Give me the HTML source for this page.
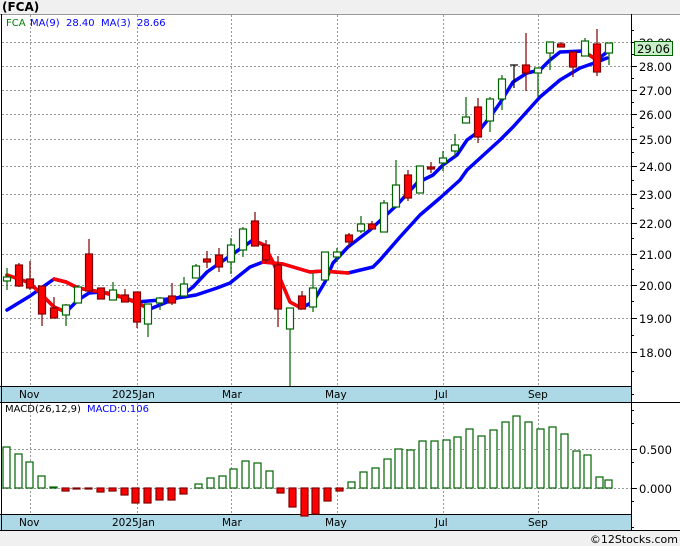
<!DOCTYPE html>
<html><head><meta charset="utf-8"><style>
body{margin:0;background:#f0f0f0;width:680px;height:546px;overflow:hidden;font-family:"DejaVu Sans","Liberation Sans",sans-serif}
svg{position:absolute;left:0;top:0}
</style></head><body>
<svg width="680" height="546" viewBox="0 0 680 546" xmlns="http://www.w3.org/2000/svg">
<rect x="0" y="0" width="680" height="546" fill="#f0f0f0"/>
<text x="2" y="11" font-size="12" font-weight="bold" fill="#000" font-family="DejaVu Sans, sans-serif">(FCA)</text>
<rect x="0" y="14" width="680" height="516" fill="#fff"/>
<rect x="0" y="386" width="631" height="16" fill="#add8e6"/>
<rect x="0" y="514" width="631" height="16" fill="#add8e6"/>
<g stroke="#000" stroke-width="1">
<line x1="0" y1="14.5" x2="680" y2="14.5" stroke="#999"/>
<line x1="1.5" y1="14" x2="1.5" y2="530"/>
<line x1="631.5" y1="14" x2="631.5" y2="530"/>
<line x1="0" y1="386.5" x2="631" y2="386.5"/>
<line x1="0" y1="402.5" x2="680" y2="402.5"/>
<line x1="0" y1="514.5" x2="631" y2="514.5"/>
<line x1="0" y1="530.5" x2="680" y2="530.5"/>
</g>
<g stroke="#999" stroke-width="1" stroke-dasharray="2,2">
<line x1="2" y1="42.5" x2="631" y2="42.5"/><line x1="2" y1="66.5" x2="631" y2="66.5"/><line x1="2" y1="90.5" x2="631" y2="90.5"/><line x1="2" y1="114.5" x2="631" y2="114.5"/><line x1="2" y1="139.5" x2="631" y2="139.5"/><line x1="2" y1="166.5" x2="631" y2="166.5"/><line x1="2" y1="194.5" x2="631" y2="194.5"/><line x1="2" y1="223.5" x2="631" y2="223.5"/><line x1="2" y1="254.5" x2="631" y2="254.5"/><line x1="2" y1="285.5" x2="631" y2="285.5"/><line x1="2" y1="318.5" x2="631" y2="318.5"/><line x1="2" y1="352.5" x2="631" y2="352.5"/>
<line x1="2" y1="449.5" x2="631" y2="449.5"/><line x1="2" y1="488.5" x2="631" y2="488.5"/>
<line x1="30.5" y1="15" x2="30.5" y2="386"/><line x1="137.5" y1="15" x2="137.5" y2="386"/><line x1="231.5" y1="15" x2="231.5" y2="386"/><line x1="337.5" y1="15" x2="337.5" y2="386"/><line x1="443.5" y1="15" x2="443.5" y2="386"/><line x1="538.5" y1="15" x2="538.5" y2="386"/>
<line x1="30.5" y1="403" x2="30.5" y2="514"/><line x1="137.5" y1="403" x2="137.5" y2="514"/><line x1="231.5" y1="403" x2="231.5" y2="514"/><line x1="337.5" y1="403" x2="337.5" y2="514"/><line x1="443.5" y1="403" x2="443.5" y2="514"/><line x1="538.5" y1="403" x2="538.5" y2="514"/>
</g>
<g stroke="#000">
<line x1="631" y1="42.5" x2="637" y2="42.5"/><line x1="631" y1="66.5" x2="637" y2="66.5"/><line x1="631" y1="90.5" x2="637" y2="90.5"/><line x1="631" y1="114.5" x2="637" y2="114.5"/><line x1="631" y1="139.5" x2="637" y2="139.5"/><line x1="631" y1="166.5" x2="637" y2="166.5"/><line x1="631" y1="194.5" x2="637" y2="194.5"/><line x1="631" y1="223.5" x2="637" y2="223.5"/><line x1="631" y1="254.5" x2="637" y2="254.5"/><line x1="631" y1="285.5" x2="637" y2="285.5"/><line x1="631" y1="318.5" x2="637" y2="318.5"/><line x1="631" y1="352.5" x2="637" y2="352.5"/>
<line x1="631" y1="30.5" x2="634" y2="30.5"/><line x1="631" y1="54.5" x2="634" y2="54.5"/><line x1="631" y1="78.5" x2="634" y2="78.5"/><line x1="631" y1="102.5" x2="634" y2="102.5"/><line x1="631" y1="127.5" x2="634" y2="127.5"/><line x1="631" y1="152.5" x2="634" y2="152.5"/><line x1="631" y1="180.5" x2="634" y2="180.5"/><line x1="631" y1="208.5" x2="634" y2="208.5"/><line x1="631" y1="238.5" x2="634" y2="238.5"/><line x1="631" y1="269.5" x2="634" y2="269.5"/><line x1="631" y1="301.5" x2="634" y2="301.5"/><line x1="631" y1="335.5" x2="634" y2="335.5"/><line x1="631" y1="371.5" x2="634" y2="371.5"/><line x1="631" y1="394.5" x2="634" y2="394.5"/>
<line x1="631" y1="410.5" x2="634" y2="410.5"/><line x1="631" y1="423.5" x2="634" y2="423.5"/><line x1="631" y1="449.5" x2="637" y2="449.5"/><line x1="631" y1="462.5" x2="634" y2="462.5"/><line x1="631" y1="488.5" x2="637" y2="488.5"/><line x1="631" y1="501.5" x2="634" y2="501.5"/><line x1="631" y1="527.5" x2="634" y2="527.5"/>
</g>
<g font-size="11.5" fill="#000" font-family="DejaVu Sans, sans-serif">
<text x="639" y="47">29.00</text><text x="639" y="71">28.00</text><text x="639" y="95">27.00</text><text x="639" y="119">26.00</text><text x="639" y="144">25.00</text><text x="639" y="171">24.00</text><text x="639" y="199">23.00</text><text x="639" y="228">22.00</text><text x="639" y="259">21.00</text><text x="639" y="290">20.00</text><text x="639" y="323">19.00</text><text x="639" y="357">18.00</text>
<text x="639" y="454">0.500</text><text x="639" y="493">0.000</text>
</g>
<rect x="634.5" y="41.5" width="38" height="14" fill="#c8f0c8" stroke="#006400"/>
<text x="637" y="53" font-size="11.5" fill="#000">29.06</text>
<g font-size="10.5" fill="#000">
<text x="19" y="398">Nov</text><text x="112" y="398">2025Jan</text><text x="222" y="398">Mar</text><text x="325" y="398">May</text><text x="435" y="398">Jul</text><text x="528" y="398">Sep</text>
<text x="19" y="526">Nov</text><text x="112" y="526">2025Jan</text><text x="222" y="526">Mar</text><text x="325" y="526">May</text><text x="435" y="526">Jul</text><text x="528" y="526">Sep</text>
</g>
<g font-size="10">
<text x="6" y="26" fill="#008000">FCA</text>
<text x="30" y="26" fill="#0000ff">MA(9)</text>
<text x="66" y="26" fill="#0000ff">28.40</text>
<text x="101" y="26" fill="#0000ff">MA(3)</text>
<text x="137" y="26" fill="#0000ff">28.66</text>
<text x="5" y="412" fill="#000">MACD(26,12,9)</text>
<text x="87" y="412" fill="#0000ff">MACD:0.106</text>
</g>
<g fill="none" stroke-width="3.5" stroke-linejoin="round" stroke-linecap="round">
<polyline stroke="#0000ff" points="7,310 30,296 54,279 66,282 78,288 89,290 113,294 137,302 160,300 184,297 196,295 217,288 230,283 250,267 263,262 283,264 310,272 323,271 348,273 373,267 380,260 400,237 420,215 440,198 460,180 467,170 500,140 513,127 540,97 560,80 580,68 597,62 607,58"/>
<polyline stroke="#0000ff" points="7,275 19,279 30,283 42,295 54,307 66,312 78,300 89,293 101,292 113,295 125,298 137,303 150,309 167,302 180,297 193,287 207,272 227,258 253,240 264,245 273,262 290,302 301,308 313,302 325,282 333,263 348,247 370,230 383,218 397,205 417,183 433,175 443,165 457,155 467,140 478,132 490,117 500,103 513,82 527,73 540,70 550,60 560,52 583,51 597,60 607,52"/>
<polyline stroke="#ff0000" points="54,279 66,282 78,288 89,290 113,294 137,302"/>
<polyline stroke="#ff0000" points="263,262 283,264 310,272 323,271 348,273"/>
<polyline stroke="#ff0000" points="7,275 19,279 30,283 42,295 54,307 66,312"/>
<polyline stroke="#ff0000" points="101,292 113,295 125,298 137,303 150,309"/>
<polyline stroke="#ff0000" points="253,240 264,245 273,262 290,302 301,308"/>
<polyline stroke="#ff0000" points="583,51 597,60"/>
</g>
<g stroke-width="1.2">
<g stroke="#006400"><line x1="7" y1="268" x2="7" y2="290"/><rect x="3.5" y="277" width="7" height="4" fill="#fff"/></g>
<g stroke="#800000"><line x1="19" y1="263" x2="19" y2="287"/><rect x="15.5" y="265" width="7" height="21" fill="#f00"/></g>
<g stroke="#800000"><line x1="30" y1="261" x2="30" y2="290"/><rect x="26.5" y="279" width="7" height="9" fill="#f00"/></g>
<g stroke="#800000"><line x1="42" y1="286" x2="42" y2="326"/><rect x="38.5" y="286" width="7" height="28" fill="#f00"/></g>
<g stroke="#800000"><line x1="54" y1="297" x2="54" y2="318"/><rect x="50.5" y="308" width="7" height="10" fill="#f00"/></g>
<g stroke="#006400"><line x1="66" y1="304" x2="66" y2="326"/><rect x="62.5" y="305" width="7" height="10" fill="#fff"/></g>
<g stroke="#006400"><line x1="78" y1="285" x2="78" y2="303"/><rect x="74.5" y="287" width="7" height="16" fill="#fff"/></g>
<g stroke="#800000"><line x1="89" y1="239" x2="89" y2="291"/><rect x="85.5" y="254" width="7" height="37" fill="#f00"/></g>
<g stroke="#800000"><line x1="101" y1="288" x2="101" y2="299"/><rect x="97.5" y="288" width="7" height="11" fill="#f00"/></g>
<g stroke="#006400"><line x1="113" y1="282" x2="113" y2="300"/><rect x="109.5" y="290" width="7" height="10" fill="#fff"/></g>
<g stroke="#800000"><line x1="125" y1="289" x2="125" y2="302"/><rect x="121.5" y="295" width="7" height="7" fill="#f00"/></g>
<g stroke="#800000"><line x1="137" y1="292" x2="137" y2="328"/><rect x="133.5" y="292" width="7" height="30" fill="#f00"/></g>
<g stroke="#006400"><line x1="148" y1="304" x2="148" y2="337"/><rect x="144.5" y="304" width="7" height="20" fill="#fff"/></g>
<g stroke="#006400"><line x1="160" y1="297" x2="160" y2="310"/><rect x="156.5" y="298" width="7" height="5" fill="#fff"/></g>
<g stroke="#800000"><line x1="172" y1="283" x2="172" y2="305"/><rect x="168.5" y="296" width="7" height="7" fill="#f00"/></g>
<g stroke="#006400"><line x1="184" y1="277" x2="184" y2="296"/><rect x="180.5" y="284" width="7" height="12" fill="#fff"/></g>
<g stroke="#006400"><line x1="196" y1="264" x2="196" y2="278"/><rect x="192.5" y="266" width="7" height="12" fill="#fff"/></g>
<g stroke="#800000"><line x1="207" y1="251" x2="207" y2="268"/><rect x="203.5" y="259" width="7" height="3" fill="#f00"/></g>
<g stroke="#800000"><line x1="219" y1="248" x2="219" y2="272"/><rect x="215.5" y="255" width="7" height="12" fill="#f00"/></g>
<g stroke="#006400"><line x1="231" y1="238" x2="231" y2="274"/><rect x="227.5" y="245" width="7" height="17" fill="#fff"/></g>
<g stroke="#006400"><line x1="243" y1="227" x2="243" y2="257"/><rect x="239.5" y="229" width="7" height="21" fill="#fff"/></g>
<g stroke="#800000"><line x1="255" y1="212" x2="255" y2="246"/><rect x="251.5" y="221" width="7" height="25" fill="#f00"/></g>
<g stroke="#800000"><line x1="266" y1="240" x2="266" y2="263"/><rect x="262.5" y="245" width="7" height="15" fill="#f00"/></g>
<g stroke="#800000"><line x1="278" y1="256" x2="278" y2="327"/><rect x="274.5" y="265" width="7" height="44" fill="#f00"/></g>
<g stroke="#006400"><line x1="290" y1="308" x2="290" y2="386"/><rect x="286.5" y="308" width="7" height="21" fill="#fff"/></g>
<g stroke="#800000"><line x1="302" y1="291" x2="302" y2="309"/><rect x="298.5" y="296" width="7" height="13" fill="#f00"/></g>
<g stroke="#006400"><line x1="313" y1="273" x2="313" y2="312"/><rect x="309.5" y="288" width="7" height="19" fill="#fff"/></g>
<g stroke="#006400"><line x1="325" y1="252" x2="325" y2="280"/><rect x="321.5" y="252" width="7" height="28" fill="#fff"/></g>
<g stroke="#006400"><line x1="337" y1="248" x2="337" y2="262"/><rect x="333.5" y="252" width="7" height="5" fill="#fff"/></g>
<g stroke="#800000"><line x1="349" y1="233" x2="349" y2="247"/><rect x="345.5" y="235" width="7" height="7" fill="#f00"/></g>
<g stroke="#006400"><line x1="361" y1="216" x2="361" y2="233"/><rect x="357.5" y="224" width="7" height="7" fill="#fff"/></g>
<g stroke="#800000"><line x1="372" y1="221" x2="372" y2="229"/><rect x="368.5" y="224" width="7" height="5" fill="#f00"/></g>
<g stroke="#006400"><line x1="384" y1="200" x2="384" y2="232"/><rect x="380.5" y="203" width="7" height="29" fill="#fff"/></g>
<g stroke="#006400"><line x1="396" y1="160" x2="396" y2="207"/><rect x="392.5" y="185" width="7" height="22" fill="#fff"/></g>
<g stroke="#800000"><line x1="408" y1="170" x2="408" y2="201"/><rect x="404.5" y="175" width="7" height="23" fill="#f00"/></g>
<g stroke="#006400"><line x1="420" y1="166" x2="420" y2="193"/><rect x="416.5" y="166" width="7" height="27" fill="#fff"/></g>
<g stroke="#800000"><line x1="431" y1="162" x2="431" y2="173"/><rect x="427.5" y="167" width="7" height="2" fill="#f00"/></g>
<g stroke="#006400"><line x1="443" y1="151" x2="443" y2="171"/><rect x="439.5" y="158" width="7" height="5" fill="#fff"/></g>
<g stroke="#006400"><line x1="455" y1="134" x2="455" y2="157"/><rect x="451.5" y="145" width="7" height="6" fill="#fff"/></g>
<g stroke="#006400"><line x1="466" y1="97" x2="466" y2="123"/><rect x="462.5" y="117" width="7" height="6" fill="#fff"/></g>
<g stroke="#800000"><line x1="478" y1="98" x2="478" y2="143"/><rect x="474.5" y="107" width="7" height="30" fill="#f00"/></g>
<g stroke="#006400"><line x1="490" y1="97" x2="490" y2="132"/><rect x="486.5" y="99" width="7" height="22" fill="#fff"/></g>
<g stroke="#006400"><line x1="502" y1="75" x2="502" y2="110"/><rect x="498.5" y="79" width="7" height="20" fill="#fff"/></g>
<g stroke="#000"><line x1="514" y1="65" x2="514" y2="88"/><line x1="510" y1="65" x2="518" y2="65"/></g>
<g stroke="#800000"><line x1="526" y1="33" x2="526" y2="91"/><rect x="522.5" y="65" width="7" height="8" fill="#f00"/></g>
<g stroke="#006400"><line x1="538" y1="68" x2="538" y2="97"/><rect x="534.5" y="68" width="7" height="5" fill="#fff"/></g>
<g stroke="#006400"><line x1="550" y1="42" x2="550" y2="70"/><rect x="546.5" y="42" width="7" height="11" fill="#fff"/></g>
<g stroke="#800000"><line x1="561" y1="42" x2="561" y2="47"/><rect x="557.5" y="44" width="7" height="3" fill="#f00"/></g>
<g stroke="#800000"><line x1="573" y1="52" x2="573" y2="77"/><rect x="569.5" y="52" width="7" height="15" fill="#f00"/></g>
<g stroke="#006400"><line x1="585" y1="38" x2="585" y2="56"/><rect x="581.5" y="41" width="7" height="15" fill="#fff"/></g>
<g stroke="#800000"><line x1="597" y1="29" x2="597" y2="76"/><rect x="593.5" y="44" width="7" height="28" fill="#f00"/></g>
<g stroke="#006400"><line x1="609" y1="43" x2="609" y2="65"/><rect x="605.5" y="43" width="7" height="10" fill="#fff"/></g>
</g>
<g stroke-width="1.2">
<g stroke="#006400" fill="#fff">
<rect x="3" y="447" width="7" height="41"/><rect x="15" y="454" width="7" height="34"/><rect x="26" y="462" width="7" height="26"/><rect x="38" y="476" width="7" height="12"/><rect x="50" y="487" width="7" height="1"/>
<rect x="195" y="484" width="7" height="4"/><rect x="207" y="478" width="7" height="10"/><rect x="219" y="476" width="7" height="12"/><rect x="230" y="469" width="7" height="19"/><rect x="242" y="461" width="7" height="27"/><rect x="254" y="463" width="7" height="25"/><rect x="266" y="471" width="7" height="17"/>
<rect x="348" y="482" width="7" height="6"/><rect x="360" y="472" width="7" height="16"/><rect x="372" y="468" width="7" height="20"/><rect x="384" y="459" width="7" height="29"/><rect x="395" y="449" width="7" height="39"/><rect x="407" y="450" width="7" height="38"/><rect x="419" y="441" width="7" height="47"/><rect x="431" y="441" width="7" height="47"/><rect x="443" y="440" width="7" height="48"/><rect x="454" y="437" width="7" height="51"/><rect x="466" y="429" width="7" height="59"/><rect x="478" y="436" width="7" height="52"/><rect x="490" y="430" width="7" height="58"/><rect x="502" y="422" width="7" height="66"/><rect x="513" y="416" width="7" height="72"/><rect x="525" y="422" width="7" height="66"/><rect x="537" y="429" width="7" height="59"/><rect x="549" y="427" width="7" height="61"/><rect x="561" y="434" width="7" height="54"/><rect x="573" y="451" width="7" height="37"/><rect x="584" y="455" width="7" height="33"/><rect x="596" y="477" width="7" height="11"/><rect x="605" y="480" width="7" height="8"/>
</g>
<g stroke="#800000" fill="#f00">
<rect x="62" y="488" width="7" height="3"/><rect x="73" y="488" width="7" height="1"/><rect x="85" y="488" width="7" height="1"/><rect x="97" y="488" width="7" height="4"/><rect x="109" y="488" width="7" height="3"/><rect x="121" y="488" width="7" height="7"/><rect x="132" y="488" width="7" height="15"/><rect x="144" y="488" width="7" height="15"/><rect x="156" y="488" width="7" height="12"/><rect x="168" y="488" width="7" height="12"/><rect x="180" y="488" width="7" height="6"/>
<rect x="277" y="488" width="7" height="5"/><rect x="289" y="488" width="7" height="19"/><rect x="301" y="488" width="7" height="28"/><rect x="312" y="488" width="7" height="26"/><rect x="324" y="488" width="7" height="13"/><rect x="336" y="488" width="7" height="3"/>
</g>
</g>
<text x="678" y="543" font-size="11" fill="#000" text-anchor="end">©12Stocks.com</text>
</svg>
</body></html>
